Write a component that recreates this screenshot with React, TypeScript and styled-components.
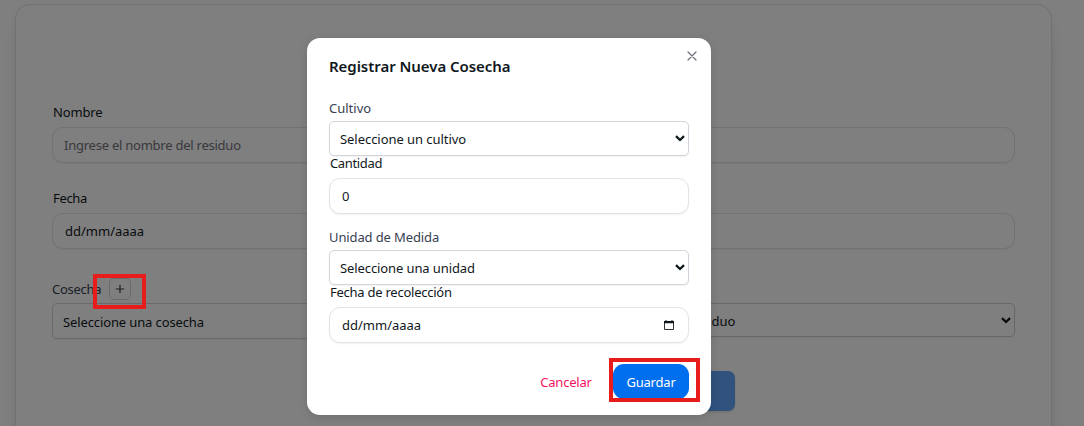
import React from "react";
import styled, { createGlobalStyle } from "styled-components";

const GlobalStyle = createGlobalStyle`
  * { box-sizing: border-box; }
  html, body { margin: 0; height: 426px; overflow: hidden; background: #fff; }
  body { font-family: "Noto Sans", "Open Sans", sans-serif; font-size: 13px; color: #11181c; }
`;

const Screen = styled.div`
  position: relative;
  width: 1084px;
  height: 426px;
  padding: 4px 32px 0 15px;
  overflow: hidden;
`;

const Card = styled.main`
  height: 520px;
  padding: 97px 36px 0 36px;
  border: 1px solid #e2e2e4;
  border-radius: 15px;
  background: #fff;
  box-shadow: 0 20px 25px -5px rgba(0, 0, 0, 0.1), 0 2px 10px rgba(0, 0, 0, 0.05);
`;

const Columns = styled.div`
  display: grid;
  grid-template-columns: 1fr 1fr;
  column-gap: 24px;
`;

const Field = styled.div<{ $before?: number }>`
  display: flex;
  flex-direction: column;
  margin-top: ${(p) => p.$before ?? 0}px;
`;

const Label = styled.label<{ $h?: number; $after?: number; $muted?: boolean; $track?: number; $inset?: number }>`
  display: flex;
  align-items: center;
  gap: 8px;
  height: ${(p) => p.$h ?? 20}px;
  margin-bottom: ${(p) => p.$after ?? 5}px;
  padding-left: ${(p) => p.$inset ?? 0}px;
  color: ${(p) => (p.$muted ? "#374151" : "#11181c")};
  letter-spacing: ${(p) => p.$track ?? 0}px;
  white-space: nowrap;
`;

const Control = styled.div<{ $select?: boolean; $h?: number; $grey?: boolean; $placeholder?: boolean; $track?: number }>`
  display: flex;
  align-items: center;
  justify-content: space-between;
  height: ${(p) => p.$h ?? 36}px;
  padding: ${(p) => (p.$select ? "0 3px 0 10px" : p.$placeholder ? "0 13px 0 11px" : "0 13px 0 12px")};
  border: 1px solid ${(p) => (p.$select && !p.$grey ? "#d1d5db" : p.$grey ? "#d0d0d2" : "#e4e4e7")};
  border-radius: ${(p) => (p.$select ? 5 : 11)}px;
  background: #fff;
  box-shadow: 0 1px 2px rgba(0, 0, 0, 0.06);
  color: ${(p) => (p.$placeholder ? "#71717a" : "#11181c")};
  letter-spacing: ${(p) => p.$track ?? 0}px;
  white-space: nowrap;
`;

const OptionText = styled.span`
  padding-top: 2px;
`;

const AddButton = styled.button`
  display: flex;
  align-items: center;
  justify-content: center;
  width: 22px;
  height: 22px;
  padding: 0;
  border: 1px solid #d1d5db;
  border-radius: 5px;
  background: transparent;
  color: #374151;
`;

const SubmitRow = styled.div`
  display: flex;
  justify-content: center;
  margin-top: 32px;
`;

const Submit = styled.button`
  width: 403px;
  height: 40px;
  border: 0;
  border-radius: 7px;
  background: #60a5fa;
  box-shadow: 0 1px 3px rgba(0, 0, 0, 0.15);
`;

const Overlay = styled.div`
  position: absolute;
  inset: 0;
  display: flex;
  align-items: flex-start;
  padding: 38px 0 0 307px;
  background: rgba(0, 0, 0, 0.5);
`;

const Dialog = styled.section`
  position: relative;
  width: 404px;
  height: 377px;
  padding: 16px 22px 0;
  border-radius: 13px;
  background: #fff;
  box-shadow: 0 2px 10px rgba(0, 0, 0, 0.12);
`;

const Title = styled.h2`
  height: 24px;
  margin: 0 0 20px;
  font-size: 15px;
  font-weight: 600;
  line-height: 24px;
  letter-spacing: -0.05px;
`;

const Close = styled.button`
  position: absolute;
  top: 13px;
  right: 14px;
  display: flex;
  padding: 0;
  border: 0;
  background: none;
  color: #71717a;
`;

const Footer = styled.footer`
  display: flex;
  justify-content: flex-end;
  margin-top: 21px;
`;

const Action = styled.button<{ $primary?: boolean }>`
  width: ${(p) => (p.$primary ? 76 : 94)}px;
  height: 35px;
  padding: 0;
  border: 0;
  border-radius: 11px;
  background: ${(p) => (p.$primary ? "#006fee" : "transparent")};
  color: ${(p) => (p.$primary ? "#fff" : "#f31260")};
  font: inherit;
  letter-spacing: -0.2px;
`;

const Highlight = styled.div<{ $x: number; $y: number; $w: number; $h: number }>`
  position: absolute;
  left: ${(p) => p.$x}px;
  top: ${(p) => p.$y}px;
  width: ${(p) => p.$w}px;
  height: ${(p) => p.$h}px;
  border: 4px solid #e91c1c;
`;

const Chevron = () => (
  <svg width="10" height="7" viewBox="0 0 10 7" fill="none">
    <path d="M1 1.2 5 5 9 1.2" stroke="#11181c" strokeWidth="2.3" />
  </svg>
);

const Calendar = () => (
  <svg width="12" height="12" viewBox="0 0 12 12" fill="none">
    <path d="M1.5 2.5h9v8h-9z" stroke="#333" />
    <path d="M1 2h10v2.2H1zM2.5 1h1v1h-1zM8.5 1h1v1h-1z" fill="#11181c" />
  </svg>
);

const Plus = () => (
  <svg width="10" height="10" viewBox="0 0 10 10" fill="none">
    <path d="M5 .8v8.4M.8 5h8.4" stroke="currentColor" strokeWidth="1.2" />
  </svg>
);

const Cross = () => (
  <svg width="10" height="10" viewBox="0 0 10 10" fill="none">
    <path d="M1 1l8 8M9 1 1 9" stroke="currentColor" strokeWidth="1.2" strokeLinecap="round" />
  </svg>
);

export default function App() {
  return (
    <>
      <GlobalStyle />
      <Screen>
        <Card>
          <Columns>
            <div>
              <Field>
                <Label $inset={1} $track={-0.15}>Nombre</Label>
                <Control $placeholder $track={-0.24}>Ingrese el nombre del residuo</Control>
              </Field>
              <Field $before={25}>
                <Label $inset={1} $track={-0.35}>Fecha</Label>
                <Control>dd/mm/aaaa</Control>
              </Field>
              <Field $before={29}>
                <Label $h={22} $after={3} $muted $track={-0.28}>
                  Cosecha
                  <AddButton aria-label="Agregar cosecha"><Plus /></AddButton>
                </Label>
                <Control $select $track={-0.12}><OptionText>Seleccione una cosecha</OptionText><Chevron /></Control>
              </Field>
            </div>
            <div>
              <Field $before={25}><Control /></Field>
              <Field $before={50}><Control /></Field>
              <Field $before={54}>
                <Control $select $grey $h={34}><OptionText>Seleccione un tipo de residuo</OptionText><Chevron /></Control>
              </Field>
            </div>
          </Columns>
          <SubmitRow><Submit aria-label="Registrar" /></SubmitRow>
        </Card>
        <Overlay>
          <Dialog role="dialog">
            <Close aria-label="Cerrar"><Cross /></Close>
            <Title>Registrar Nueva Cosecha</Title>
            <Field $before={-1}>
              <Label $h={21} $after={3} $muted>Cultivo</Label>
              <Control $select $h={35} $track={-0.05}>Seleccione un cultivo<Chevron /></Control>
            </Field>
            <Field>
              <Label $h={13} $after={9} $inset={1} $track={-0.35}>Cantidad</Label>
              <Control>0</Control>
            </Field>
            <Field $before={13}>
              <Label $after={3} $muted $track={-0.12}>Unidad de Medida</Label>
              <Control $select $h={35} $track={-0.1}>Seleccione una unidad<Chevron /></Control>
            </Field>
            <Field>
              <Label $h={13} $after={9} $inset={1} $track={-0.25}>Fecha de recolección</Label>
              <Control>dd/mm/aaaa<Calendar /></Control>
            </Field>
            <Footer>
              <Action>Cancelar</Action>
              <Action $primary>Guardar</Action>
            </Footer>
          </Dialog>
        </Overlay>
        <Highlight $x={93} $y={274} $w={53} $h={35} />
        <Highlight $x={609} $y={358} $w={91} $h={44} />
      </Screen>
    </>
  );
}
